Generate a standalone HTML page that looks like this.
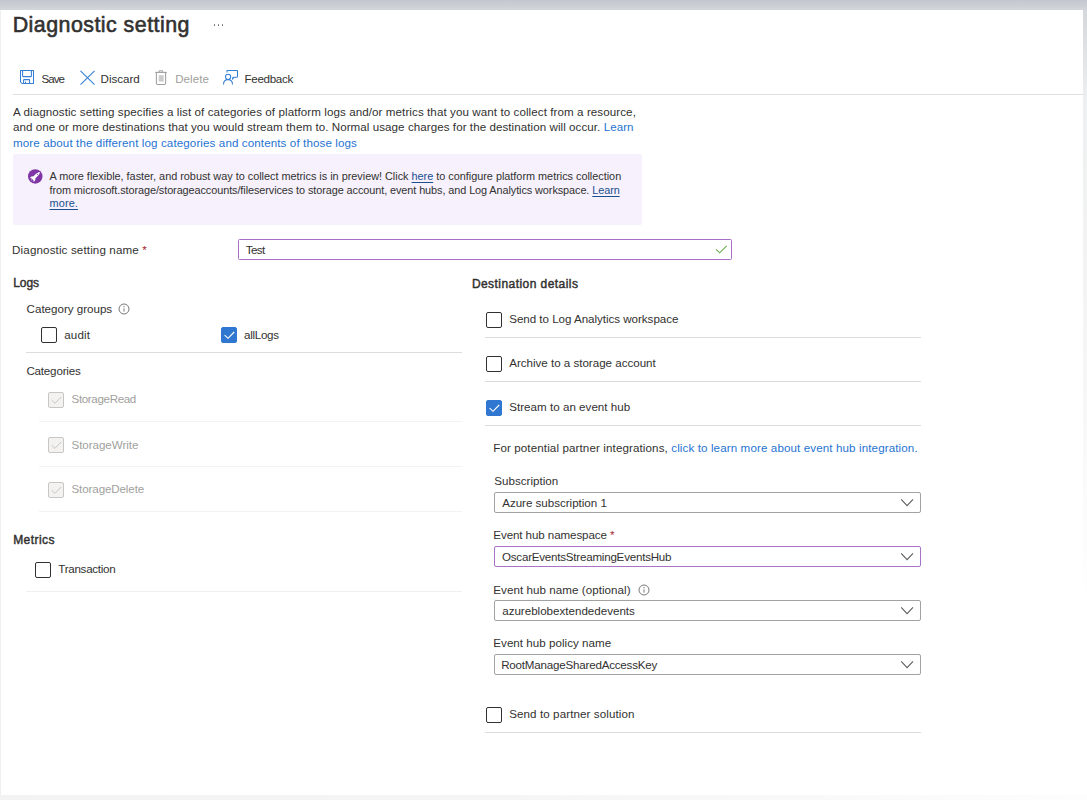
<!DOCTYPE html>
<html><head><meta charset="utf-8"><title>Diagnostic setting</title>
<style>
html,body{margin:0;padding:0;width:1087px;height:800px;overflow:hidden;background:#fff}
.abs{position:absolute}
.t{position:absolute;font-family:"Liberation Sans",sans-serif;line-height:24px;white-space:nowrap}
.lk{color:#1f74d2}
.ul{color:#1b4f8e;text-decoration:underline;text-underline-offset:1.5px}
.req{color:#a4262c}
.cb{position:absolute;width:16px;height:16px;box-sizing:border-box;border:1px solid #323130;border-radius:2px}
.cb.on{background:#2f77d0;border-color:#2f77d0}
.cb.dis{background:#f3f2f1;border-color:#c8c6c4}
.dd{position:absolute;box-sizing:border-box;border:1px solid #8a8886;border-radius:2px}
</style></head><body>
<div class='abs' style='left:0;top:0;width:1087px;height:10px;background:linear-gradient(#c2c6ce,#d3d6da)'></div>
<div class='abs' style='left:1083px;top:10px;width:4px;height:600px;background:linear-gradient(#d4d7db,#eeeff0 15%,#f6f6f6 60%,#fff)'></div>
<div class='abs' style='left:0;top:10px;width:1px;height:785px;background:#efefef'></div>
<div class='abs' style='left:0;top:795px;width:1087px;height:5px;background:linear-gradient(90deg,#f3f3f3,#f5f5f5 45%,#f9f9f9 75%,#fdfdfd)'></div>
<div class='abs' style='left:213.7px;top:24.4px;width:1.6px;height:1.6px;border-radius:50%;background:#6a6867'></div>
<div class='abs' style='left:217.7px;top:24.4px;width:1.6px;height:1.6px;border-radius:50%;background:#6a6867'></div>
<div class='abs' style='left:221.7px;top:24.4px;width:1.6px;height:1.6px;border-radius:50%;background:#6a6867'></div>
<svg class='abs' style='left:19px;top:69px' width='16' height='16' viewBox='-1 -1 16 16'>
<path d='M0.5,0.5 H13.5 V13.5 H2 L0.5,12 Z' fill='none' stroke='#3580d6' stroke-width='1.05' stroke-linejoin='round'/>
<path d='M2.6,0.5 V6 Q2.6,6.6 3.2,6.6 H10.8 Q11.4,6.6 11.4,6 V0.5' fill='none' stroke='#3580d6' stroke-width='1.05'/>
<path d='M3.6,13.5 V10.2 Q3.6,9.6 4.2,9.6 H9 Q9.6,9.6 9.6,10.2 V13.5' fill='none' stroke='#3580d6' stroke-width='1.05'/>
<line x1='5.5' y1='11.6' x2='5.5' y2='13.5' stroke='#3580d6' stroke-width='1.05'/>
</svg>
<svg class='abs' style='left:79px;top:70px' width='17' height='16' viewBox='0 0 17 16'>
<line x1='1.5' y1='0.8' x2='15.5' y2='14.6' stroke='#3580d6' stroke-width='1.1'/><line x1='15.5' y1='0.8' x2='1.5' y2='14.6' stroke='#3580d6' stroke-width='1.1'/></svg>
<svg class='abs' style='left:154px;top:69px' width='14' height='17' viewBox='0 0 14 17'>
<line x1='1.2' y1='3.4' x2='12.8' y2='3.4' stroke='#a19f9d' stroke-width='1.1'/>
<path d='M5.1,3.4 V1.8 H8.7 V3.4' fill='none' stroke='#a19f9d' stroke-width='1'/>
<path d='M2.4,3.4 V14.3 Q2.4,15.5 3.6,15.5 H10.4 Q11.6,15.5 11.6,14.3 V3.4' fill='none' stroke='#a19f9d' stroke-width='1.05'/>
<rect x='4.7' y='6.2' width='5' height='6.4' fill='#cccccc'/></svg>
<svg class='abs' style='left:222px;top:69px' width='17' height='17' viewBox='0 0 17 17'>
<path d='M5,3.6 V1.5 H15.5 V7.5 Q15.5,8.3 14.7,8.3 H11.8 L10.6,10.3 L10.6,8.3' fill='none' stroke='#3580d6' stroke-width='1.05' stroke-linejoin='round'/>
<circle cx='6.1' cy='7.8' r='2.6' fill='none' stroke='#3580d6' stroke-width='1.05'/>
<path d='M1.5,15.6 Q1.5,10.6 6.1,10.6 Q10.5,10.6 10.5,15.6' fill='none' stroke='#3580d6' stroke-width='1.05'/></svg>
<div class='abs' style='left:13px;top:94px;width:1070px;height:1px;background:#e1dfdd'></div>
<div class='abs' style='left:13px;top:154px;width:629px;height:71px;background:#f6f1fc;border-radius:2px'></div>
<svg class='abs' style='left:27px;top:168px' width='17' height='17' viewBox='-8.5 -8.5 17 17'>
<circle cx='-0.25' cy='-0.1' r='7.25' fill='#8037a5'/>
<g transform='translate(-0.1,-0.1) rotate(45)'>
<path d='M0,-6.3 C1.1,-5.2 1.4,-3.5 1.4,-1.5 L1.4,1.3 L2.7,2.9 L2.7,5.1 L1.1,4 L-1.1,4 L-2.7,5.1 L-2.7,2.9 L-1.4,1.3 L-1.4,-1.5 C-1.4,-3.5 -1.1,-5.2 0,-6.3 Z' fill='#fff'/>
<circle cx='0' cy='-3' r='0.55' fill='#8037a5'/>
<path d='M-0.7,4.5 L0.7,4.5 L0,5.9 Z' fill='#fff'/>
</g></svg>
<div class='abs' style='left:238px;top:239px;width:494px;height:21px;box-sizing:border-box;border:1px solid #a66fc5;border-radius:1.5px'></div>
<svg class='abs' style='left:714px;top:244px' width='14' height='10' viewBox='0 0 14 10'><polyline points='2,5.4 5.7,8.8 12.7,1.8' fill='none' stroke='#6aae50' stroke-width='1.1'/></svg>
<div class='cb' style='left:41px;top:327px'></div>
<div class='cb on' style='left:220.5px;top:327px'></div><svg class='abs' style='left:220.5px;top:327px' width='16' height='16' viewBox='0 0 16 16'><polyline points='3.6,8.2 7,11.3 13.2,5' fill='none' stroke='#fff' stroke-width='1.1'/></svg>
<div class='cb dis' style='left:48px;top:392px'></div><svg class='abs' style='left:48px;top:392px' width='16' height='16' viewBox='0 0 16 16'><polyline points='3.6,8.2 7,11.3 13.2,5' fill='none' stroke='#c8c6c4' stroke-width='1'/></svg>
<div class='cb dis' style='left:48px;top:437px'></div><svg class='abs' style='left:48px;top:437px' width='16' height='16' viewBox='0 0 16 16'><polyline points='3.6,8.2 7,11.3 13.2,5' fill='none' stroke='#c8c6c4' stroke-width='1'/></svg>
<div class='cb dis' style='left:48px;top:482px'></div><svg class='abs' style='left:48px;top:482px' width='16' height='16' viewBox='0 0 16 16'><polyline points='3.6,8.2 7,11.3 13.2,5' fill='none' stroke='#c8c6c4' stroke-width='1'/></svg>
<div class='cb' style='left:34.5px;top:562px'></div>
<div class='cb' style='left:486px;top:312px'></div>
<div class='cb' style='left:486px;top:356px'></div>
<div class='cb on' style='left:486px;top:400px'></div><svg class='abs' style='left:486px;top:400px' width='16' height='16' viewBox='0 0 16 16'><polyline points='3.6,8.2 7,11.3 13.2,5' fill='none' stroke='#fff' stroke-width='1.1'/></svg>
<div class='cb' style='left:486px;top:707px'></div>
<div class='abs' style='left:26px;top:352px;width:436px;height:1px;background:#dddcdb'></div>
<div class='abs' style='left:39px;top:421px;width:423px;height:1px;background:#f4f3f2'></div>
<div class='abs' style='left:39px;top:466px;width:423px;height:1px;background:#f4f3f2'></div>
<div class='abs' style='left:39px;top:511px;width:423px;height:1px;background:#f4f3f2'></div>
<div class='abs' style='left:26px;top:591px;width:436px;height:1px;background:#f1f0ef'></div>
<div class='abs' style='left:485px;top:337px;width:436px;height:1px;background:#dddcdb'></div>
<div class='abs' style='left:485px;top:381px;width:436px;height:1px;background:#dddcdb'></div>
<div class='abs' style='left:485px;top:425px;width:436px;height:1px;background:#dddcdb'></div>
<div class='abs' style='left:485px;top:732px;width:436px;height:1px;background:#dddcdb'></div>
<svg class='abs' style='left:117.3px;top:301.6px' width='14' height='14' viewBox='-7 -7 14 14'><circle cx='0' cy='0' r='5' fill='none' stroke='#79777a' stroke-width='1'/><line x1='0' y1='-0.6' x2='0' y2='2.6' stroke='#79777a' stroke-width='1'/><circle cx='0' cy='-2.3' r='0.65' fill='#79777a'/></svg>
<svg class='abs' style='left:637px;top:583.2px' width='14' height='14' viewBox='-7 -7 14 14'><circle cx='0' cy='0' r='5' fill='none' stroke='#79777a' stroke-width='1'/><line x1='0' y1='-0.6' x2='0' y2='2.6' stroke='#79777a' stroke-width='1'/><circle cx='0' cy='-2.3' r='0.65' fill='#79777a'/></svg>
<div class='dd' style='left:494px;top:492px;width:427px;height:21px;border-color:#a3a2a1'></div><svg class='abs' style='left:900px;top:492px' width='16' height='21' viewBox='0 0 16 21'><polyline points='1.2,7.30 7.1,13.60 13,7.30' fill='none' stroke='#605e5c' stroke-width='1.1'/></svg>
<div class='dd' style='left:494px;top:546px;width:427px;height:21px;border-color:#a873c6'></div><svg class='abs' style='left:900px;top:546px' width='16' height='21' viewBox='0 0 16 21'><polyline points='1.2,7.30 7.1,13.60 13,7.30' fill='none' stroke='#605e5c' stroke-width='1.1'/></svg>
<div class='dd' style='left:494px;top:600px;width:427px;height:21px;border-color:#a3a2a1'></div><svg class='abs' style='left:900px;top:600px' width='16' height='21' viewBox='0 0 16 21'><polyline points='1.2,7.30 7.1,13.60 13,7.30' fill='none' stroke='#605e5c' stroke-width='1.1'/></svg>
<div class='dd' style='left:494px;top:654px;width:427px;height:21px;border-color:#a3a2a1'></div><svg class='abs' style='left:900px;top:654px' width='16' height='21' viewBox='0 0 16 21'><polyline points='1.2,7.30 7.1,13.60 13,7.30' fill='none' stroke='#605e5c' stroke-width='1.1'/></svg>
<div class='t' style='left:12.7px;top:13px;font-size:21.4px;font-weight:400;letter-spacing:0.465px;color:#323130;-webkit-text-stroke:0.6px #323130;'>Diagnostic setting</div>
<div class='t' style='left:41.4px;top:67px;font-size:11.6px;font-weight:400;letter-spacing:-0.967px;color:#323130;'>Save</div>
<div class='t' style='left:100.6px;top:67px;font-size:11.6px;font-weight:400;letter-spacing:-0.033px;color:#323130;'>Discard</div>
<div class='t' style='left:175.2px;top:67px;font-size:11.6px;font-weight:400;letter-spacing:0.04px;color:#a19f9d;'>Delete</div>
<div class='t' style='left:244.6px;top:67px;font-size:11.6px;font-weight:400;letter-spacing:-0.329px;color:#323130;'>Feedback</div>
<div class='t' style='left:13.0px;top:100px;font-size:11.6px;font-weight:400;letter-spacing:0.081px;color:#323130;'>A diagnostic setting specifies a list of categories of platform logs and/or metrics that you want to collect from a resource,</div>
<div class='t' style='left:13.0px;top:115px;font-size:11.6px;font-weight:400;letter-spacing:0.06px;color:#323130;'>and one or more destinations that you would stream them to. Normal usage charges for the destination will occur. <span class=lk>Learn</span></div>
<div class='t' style='left:13.0px;top:131px;font-size:11.6px;font-weight:400;letter-spacing:0.108px;color:#323130;'><span class=lk>more about the different log categories and contents of those logs</span></div>
<div class='t' style='left:49.5px;top:164px;font-size:10.9px;font-weight:400;letter-spacing:-0.022px;color:#323130;'>A more flexible, faster, and robust way to collect metrics is in preview! Click <span class=ul>here</span> to configure platform metrics collection</div>
<div class='t' style='left:49.5px;top:178px;font-size:10.9px;font-weight:400;letter-spacing:-0.088px;color:#323130;'>from microsoft.storage/storageaccounts/fileservices to storage account, event hubs, and Log Analytics workspace. <span class=ul>Learn</span></div>
<div class='t' style='left:49.5px;top:191px;font-size:10.9px;font-weight:400;letter-spacing:0.125px;color:#323130;'><span class=ul>more.</span></div>
<div class='t' style='left:12.1px;top:238px;font-size:11.6px;font-weight:400;letter-spacing:0.133px;color:#323130;'>Diagnostic setting name <span class=req>*</span></div>
<div class='t' style='left:245.8px;top:238px;font-size:11.6px;font-weight:400;letter-spacing:-0.633px;color:#323130;'>Test</div>
<div class='t' style='left:13.3px;top:271px;font-size:12px;font-weight:400;letter-spacing:-0.133px;color:#323130;-webkit-text-stroke:0.45px #323130;'>Logs</div>
<div class='t' style='left:471.9px;top:272px;font-size:12px;font-weight:400;letter-spacing:0.444px;color:#323130;-webkit-text-stroke:0.45px #323130;'>Destination details</div>
<div class='t' style='left:26.6px;top:297px;font-size:11.6px;font-weight:400;letter-spacing:-0.014px;color:#323130;'>Category groups</div>
<div class='t' style='left:64.2px;top:323px;font-size:11.6px;font-weight:400;letter-spacing:0.175px;color:#323130;'>audit</div>
<div class='t' style='left:244.0px;top:323px;font-size:11.6px;font-weight:400;letter-spacing:-0.283px;color:#323130;'>allLogs</div>
<div class='t' style='left:26.4px;top:359px;font-size:11.6px;font-weight:400;letter-spacing:-0.189px;color:#323130;'>Categories</div>
<div class='t' style='left:71.5px;top:387px;font-size:11.6px;font-weight:400;letter-spacing:-0.35px;color:#a19f9d;'>StorageRead</div>
<div class='t' style='left:71.5px;top:433px;font-size:11.6px;font-weight:400;letter-spacing:-0.055px;color:#a19f9d;'>StorageWrite</div>
<div class='t' style='left:71.5px;top:477px;font-size:11.6px;font-weight:400;letter-spacing:-0.117px;color:#a19f9d;'>StorageDelete</div>
<div class='t' style='left:13.2px;top:528px;font-size:12px;font-weight:400;letter-spacing:0.433px;color:#323130;-webkit-text-stroke:0.45px #323130;'>Metrics</div>
<div class='t' style='left:58.3px;top:557px;font-size:11.6px;font-weight:400;letter-spacing:-0.27px;color:#323130;'>Transaction</div>
<div class='t' style='left:509.2px;top:307px;font-size:11.6px;font-weight:400;letter-spacing:-0.03px;color:#323130;'>Send to Log Analytics workspace</div>
<div class='t' style='left:509.2px;top:351px;font-size:11.6px;font-weight:400;letter-spacing:-0.015px;color:#323130;'>Archive to a storage account</div>
<div class='t' style='left:509.2px;top:395px;font-size:11.6px;font-weight:400;letter-spacing:0.024px;color:#323130;'>Stream to an event hub</div>
<div class='t' style='left:493.2px;top:436px;font-size:11.6px;font-weight:400;letter-spacing:0.113px;color:#323130;'>For potential partner integrations, <span class=lk>click to learn more about event hub integration.</span></div>
<div class='t' style='left:494.3px;top:469px;font-size:11.6px;font-weight:400;letter-spacing:0.009px;color:#323130;'>Subscription</div>
<div class='t' style='left:502.2px;top:491px;font-size:11.6px;font-weight:400;letter-spacing:-0.021px;color:#323130;'>Azure subscription 1</div>
<div class='t' style='left:493.3px;top:523px;font-size:11.6px;font-weight:400;letter-spacing:-0.095px;color:#323130;'>Event hub namespace <span class=req>*</span></div>
<div class='t' style='left:502.0px;top:545px;font-size:11.6px;font-weight:400;letter-spacing:-0.229px;color:#323130;'>OscarEventsStreamingEventsHub</div>
<div class='t' style='left:493.3px;top:578px;font-size:11.6px;font-weight:400;letter-spacing:0.054px;color:#323130;'>Event hub name (optional)</div>
<div class='t' style='left:502.2px;top:599px;font-size:11.6px;font-weight:400;letter-spacing:-0.005px;color:#323130;'>azureblobextendedevents</div>
<div class='t' style='left:493.3px;top:631px;font-size:11.6px;font-weight:400;letter-spacing:0.025px;color:#323130;'>Event hub policy name</div>
<div class='t' style='left:501.2px;top:653px;font-size:11.6px;font-weight:400;letter-spacing:-0.208px;color:#323130;'>RootManageSharedAccessKey</div>
<div class='t' style='left:509.2px;top:702px;font-size:11.6px;font-weight:400;letter-spacing:0.091px;color:#323130;'>Send to partner solution</div>
</body></html>
